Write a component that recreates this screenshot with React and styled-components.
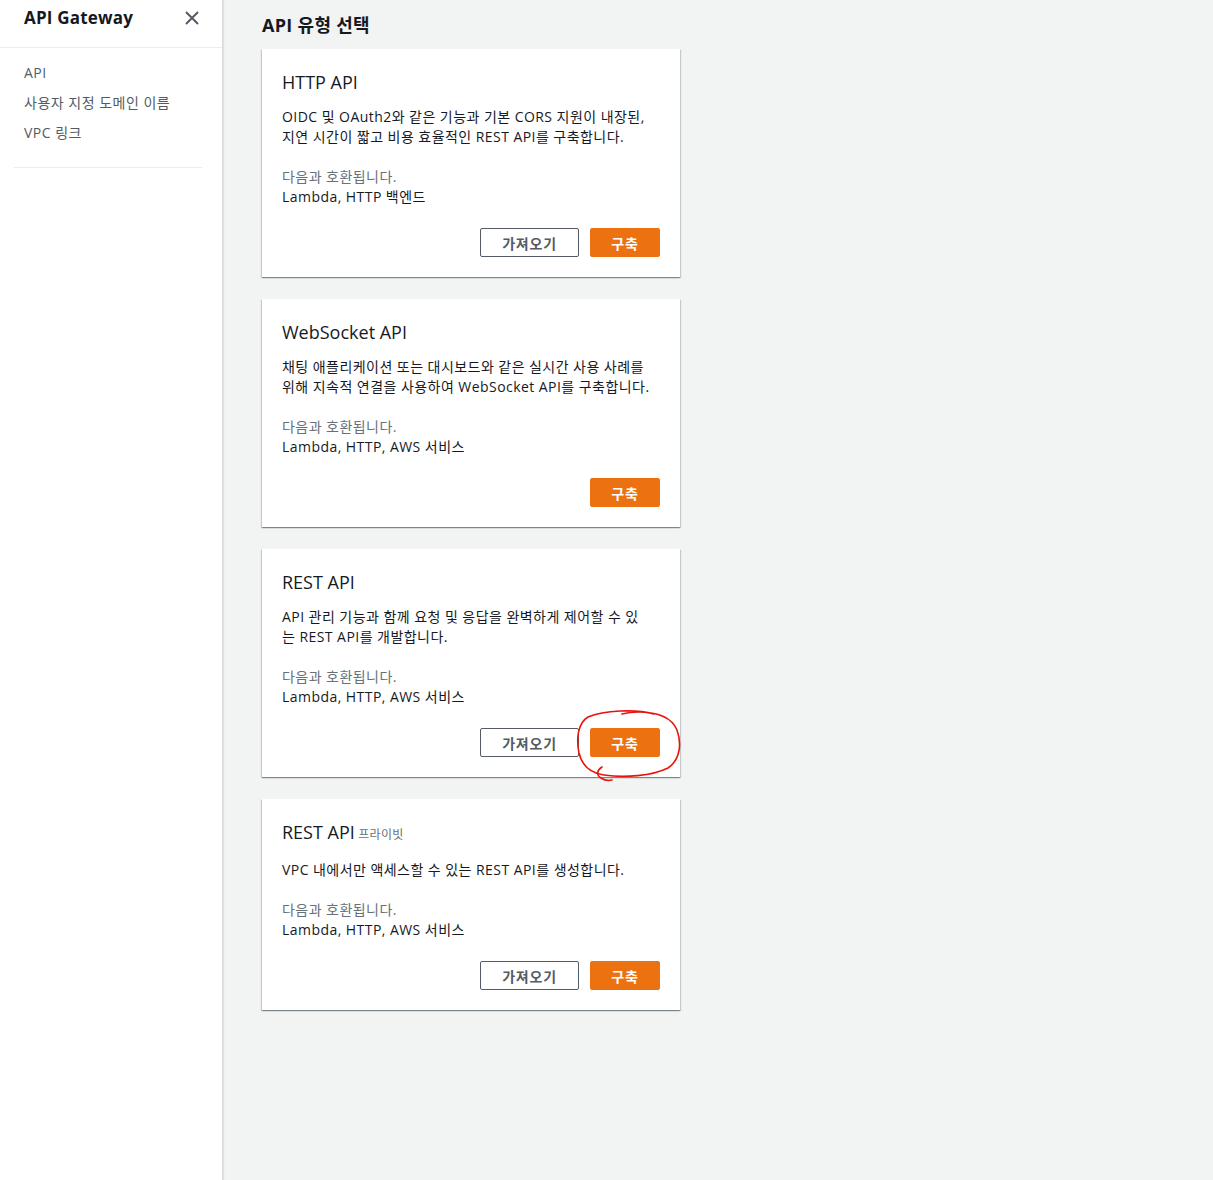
import styled, { createGlobalStyle } from 'styled-components';

const GlobalStyle = createGlobalStyle`
  body {
    margin: 0;
    font-family: "Open Sans", "Noto Sans CJK KR", sans-serif;
    color: #16191f;
    background: #f2f3f3;
  }
  * { box-sizing: border-box; }
`;

const Layout = styled.div`
  display: flex;
  min-height: 1180px;
`;

const Sidebar = styled.aside`
  width: 223px;
  flex-shrink: 0;
  background: #fff;
  border-right: 1px solid #d5dbdb;
  box-shadow: 1px 0 1px rgba(0, 28, 36, 0.08);
`;

const SideHeader = styled.div`
  height: 48px;
  display: flex;
  align-items: center;
  justify-content: space-between;
  padding: 0 22px 12px 24px;
  border-bottom: 1px solid #eaeded;
`;

const SideTitle = styled.h2`
  margin: 0;
  font-size: 17px;
  font-weight: 700;
  letter-spacing: 0.2px;
  color: #16191f;
`;

const CloseButton = styled.button`
  border: 0;
  background: none;
  padding: 0;
  display: flex;
  cursor: pointer;
`;

const NavList = styled.ul`
  list-style: none;
  margin: 0 20px 0 14px;
  padding: 10px 0 19px 10px;
  border-bottom: 1px solid #eaeded;
`;

const NavItem = styled.li`
  font-size: 14px;
  line-height: 20px;
  letter-spacing: 0.5px;
  padding: 5px 0 5px;
  color: #545b64;
`;

const Main = styled.main`
  flex: 1;
  padding: 12px 0 40px 39px;
`;

const PageTitle = styled.h1`
  margin: 0 0 11px;
  font-size: 18px;
  line-height: 26px;
  font-weight: 700;
  letter-spacing: 0.3px;
  color: #16191f;
`;

const CardList = styled.div`
  display: flex;
  flex-direction: column;
  gap: 22px;
  width: 418px;
`;

const Card = styled.section`
  background: #fff;
  padding: 22px 20px 20px;
  box-shadow: 0 1px 1px 0 rgba(0, 28, 36, 0.3), 1px 1px 1px 0 rgba(0, 28, 36, 0.15),
    -1px 1px 1px 0 rgba(0, 28, 36, 0.15);
`;

const CardTitle = styled.h3`
  margin: 0 0 14px;
  font-size: 18px;
  line-height: 22px;
  font-weight: 400;
  color: #16191f;
`;

const Tag = styled.span`
  font-size: 12px;
  color: #687078;
  letter-spacing: 0.3px;
`;

const Description = styled.p`
  margin: 0 0 20px;
  font-size: 14px;
  line-height: 20px;
  letter-spacing: 0.45px;
`;

const Compat = styled.div`
  font-size: 14px;
  line-height: 20px;
  letter-spacing: 0.45px;
`;

const CompatLabel = styled.div`
  color: #687078;
`;

const Actions = styled.div`
  display: flex;
  justify-content: flex-end;
  gap: 11px;
  margin-top: 21px;
`;

const Button = styled.button`
  height: 29px;
  padding: 0;
  font-family: inherit;
  font-size: 14px;
  font-weight: 700;
  letter-spacing: 0.8px;
  border-radius: 2px;
  cursor: pointer;
  width: ${(p) => (p.$primary ? '70px' : '99px')};
  color: ${(p) => (p.$primary ? '#fff' : '#545b64')};
  background: ${(p) => (p.$primary ? '#ec7211' : '#fff')};
  border: 1px solid ${(p) => (p.$primary ? '#ec7211' : '#545b64')};
`;

const Marked = styled.span`
  position: relative;
  display: inline-flex;
`;

const Scribble = styled.svg`
  position: absolute;
  left: -14px;
  top: -20px;
  pointer-events: none;
`;

const cards = [
  {
    title: 'HTTP API',
    desc: ['OIDC 및 OAuth2와 같은 기능과 기본 CORS 지원이 내장된,', '지연 시간이 짧고 비용 효율적인 REST API를 구축합니다.'],
    compat: 'Lambda, HTTP 백엔드',
    importBtn: true,
  },
  {
    title: 'WebSocket API',
    desc: ['채팅 애플리케이션 또는 대시보드와 같은 실시간 사용 사례를', '위해 지속적 연결을 사용하여 WebSocket API를 구축합니다.'],
    compat: 'Lambda, HTTP, AWS 서비스',
  },
  {
    title: 'REST API',
    desc: ['API 관리 기능과 함께 요청 및 응답을 완벽하게 제어할 수 있', '는 REST API를 개발합니다.'],
    compat: 'Lambda, HTTP, AWS 서비스',
    importBtn: true,
    marked: true,
  },
  {
    title: 'REST API',
    tag: '프라이빗',
    desc: ['VPC 내에서만 액세스할 수 있는 REST API를 생성합니다.'],
    compat: 'Lambda, HTTP, AWS 서비스',
    importBtn: true,
  },
];

const BuildButton = ({ marked }) =>
  marked ? (
    <Marked>
      <Button $primary>구축</Button>
      <Scribble width="108" height="74" viewBox="0 0 108 74">
        <path
          d="M78 6 C60 1 28 2 12 9 C2 15 0 30 3 45 C6 58 14 65 28 67 C48 70 76 68 92 60 C104 52 106 36 101 22 C96 10 82 4 62 4 C54 4 50 5 46 6"
          fill="none"
          stroke="#e8140c"
          strokeWidth="1.6"
          strokeLinecap="round"
        />
        <path
          d="M26 59 C21 62 20 67 25 70 C28 72 32 73 36 72"
          fill="none"
          stroke="#e8140c"
          strokeWidth="1.6"
          strokeLinecap="round"
        />
      </Scribble>
    </Marked>
  ) : (
    <Button $primary>구축</Button>
  );

const App = () => {
  return (
    <>
      <GlobalStyle />
      <Layout>
        <Sidebar>
          <SideHeader>
            <SideTitle>API Gateway</SideTitle>
            <CloseButton aria-label="닫기">
              <svg width="16" height="16" viewBox="0 0 16 16">
                <path d="M2 2 L14 14 M14 2 L2 14" stroke="#545b64" strokeWidth="2" />
              </svg>
            </CloseButton>
          </SideHeader>
          <NavList>
            <NavItem>API</NavItem>
            <NavItem>사용자 지정 도메인 이름</NavItem>
            <NavItem>VPC 링크</NavItem>
          </NavList>
        </Sidebar>
        <Main>
          <PageTitle>API 유형 선택</PageTitle>
          <CardList>
            {cards.map((c, i) => (
              <Card key={i}>
                <CardTitle>
                  {c.title}
                  {c.tag && <Tag> {c.tag}</Tag>}
                </CardTitle>
                <Description>
                  {c.desc.map((line, j) => (
                    <span key={j}>
                      {j > 0 && <br />}
                      {line}
                    </span>
                  ))}
                </Description>
                <Compat>
                  <CompatLabel>다음과 호환됩니다.</CompatLabel>
                  <div>{c.compat}</div>
                </Compat>
                <Actions>
                  {c.importBtn && <Button>가져오기</Button>}
                  <BuildButton marked={c.marked} />
                </Actions>
              </Card>
            ))}
          </CardList>
        </Main>
      </Layout>
    </>
  );
};

export default App;
